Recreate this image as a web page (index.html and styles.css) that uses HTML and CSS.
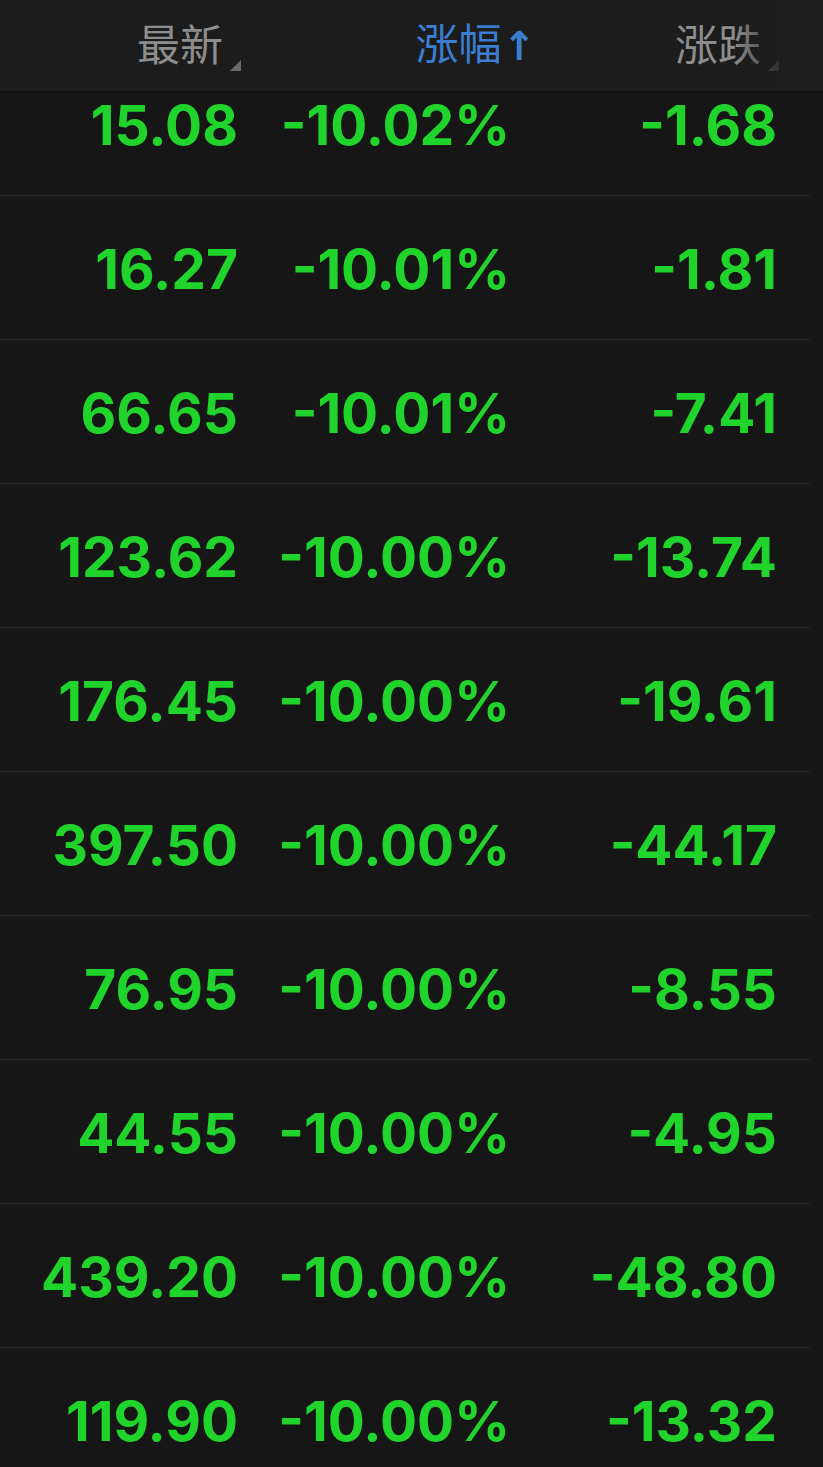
FILE: index.html
```html
<!DOCTYPE html>
<html lang="zh-CN">
<head>
    <meta charset="UTF-8">
    <meta name="viewport" content="width=device-width, initial-scale=1.0">
    <title>行情列表</title>
    <link rel="stylesheet" href="styles.css">
</head>
<body>
    <div class="screen">
        <!-- 表头 -->
        <div class="header">
            <div class="col col-price"><span class="sortable">最新</span></div>
            <div class="col col-pct active">涨幅<span class="arrow">↑</span></div>
            <div class="col col-chg"><span class="sortable">涨跌</span></div>
            <div class="header-fade"></div>
        </div>

        <!-- 列表 -->
        <div class="list">
            <div class="rows">
                <div class="row"><div class="col">15.08</div><div class="col">-10.02%</div><div class="col">-1.68</div></div>
                <div class="row"><div class="col">16.27</div><div class="col">-10.01%</div><div class="col">-1.81</div></div>
                <div class="row"><div class="col">66.65</div><div class="col">-10.01%</div><div class="col">-7.41</div></div>
                <div class="row"><div class="col">123.62</div><div class="col">-10.00%</div><div class="col">-13.74</div></div>
                <div class="row"><div class="col">176.45</div><div class="col">-10.00%</div><div class="col">-19.61</div></div>
                <div class="row"><div class="col">397.50</div><div class="col">-10.00%</div><div class="col">-44.17</div></div>
                <div class="row"><div class="col">76.95</div><div class="col">-10.00%</div><div class="col">-8.55</div></div>
                <div class="row"><div class="col">44.55</div><div class="col">-10.00%</div><div class="col">-4.95</div></div>
                <div class="row"><div class="col">439.20</div><div class="col">-10.00%</div><div class="col">-48.80</div></div>
                <div class="row"><div class="col">119.90</div><div class="col">-10.00%</div><div class="col">-13.32</div></div>
            </div>
        </div>
    </div>
</body>
</html>
```

FILE: styles.css
```css
body {
    margin: 0;
    background-color: #161616;
    font-family: Inter, "Noto Sans", "Noto Sans CJK SC", sans-serif;
}
.screen {
    width: 823px;
    height: 1467px;
    overflow: hidden;
}
.header {
    position: relative;
    display: grid;
    grid-template-columns: 241px 295px 243px;
    align-items: center;
    height: 93px;
    padding-bottom: 6px;
    box-sizing: border-box;
    background-color: #1c1c1c;
    border-bottom: 2px solid #111;
    font-family: "Noto Sans CJK SC", sans-serif;
    font-weight: 400;
    font-size: 43px;
    line-height: 1;
    color: #8d8d8d;
}
.header .col {
    text-align: right;
}
.header .active {
    color: #3b7ecf;
}
.arrow {
    font-family: "DejaVu Sans", sans-serif;
    font-weight: 700;
    font-size: 40px;
    margin-left: 1px;
}
.sortable {
    position: relative;
    padding-right: 18px;
}
.sortable::after {
    content: "";
    position: absolute;
    right: 0;
    bottom: 2px;
    border-left: 11px solid transparent;
    border-bottom: 11px solid #6a6a6a;
}
.header-fade {
    position: absolute;
    top: 0;
    right: 0;
    width: 90px;
    height: 100%;
    background: linear-gradient(to right, rgba(28, 28, 28, 0), rgba(30, 30, 30, 0.9) 60%, #1e1e1e);
}
.list {
    height: 1374px;
    overflow: hidden;
}
.rows {
    margin-top: -41px;
}
.row {
    display: grid;
    grid-template-columns: 238px 272px 267px;
    align-items: center;
    width: 810px;
    height: 143px;
    border-bottom: 1px solid #262626;
    color: #21d42c;
    font-weight: 650;
    font-size: 55px;
    line-height: 1;
}
.row .col {
    text-align: right;
    padding-top: 4px;
}
```
